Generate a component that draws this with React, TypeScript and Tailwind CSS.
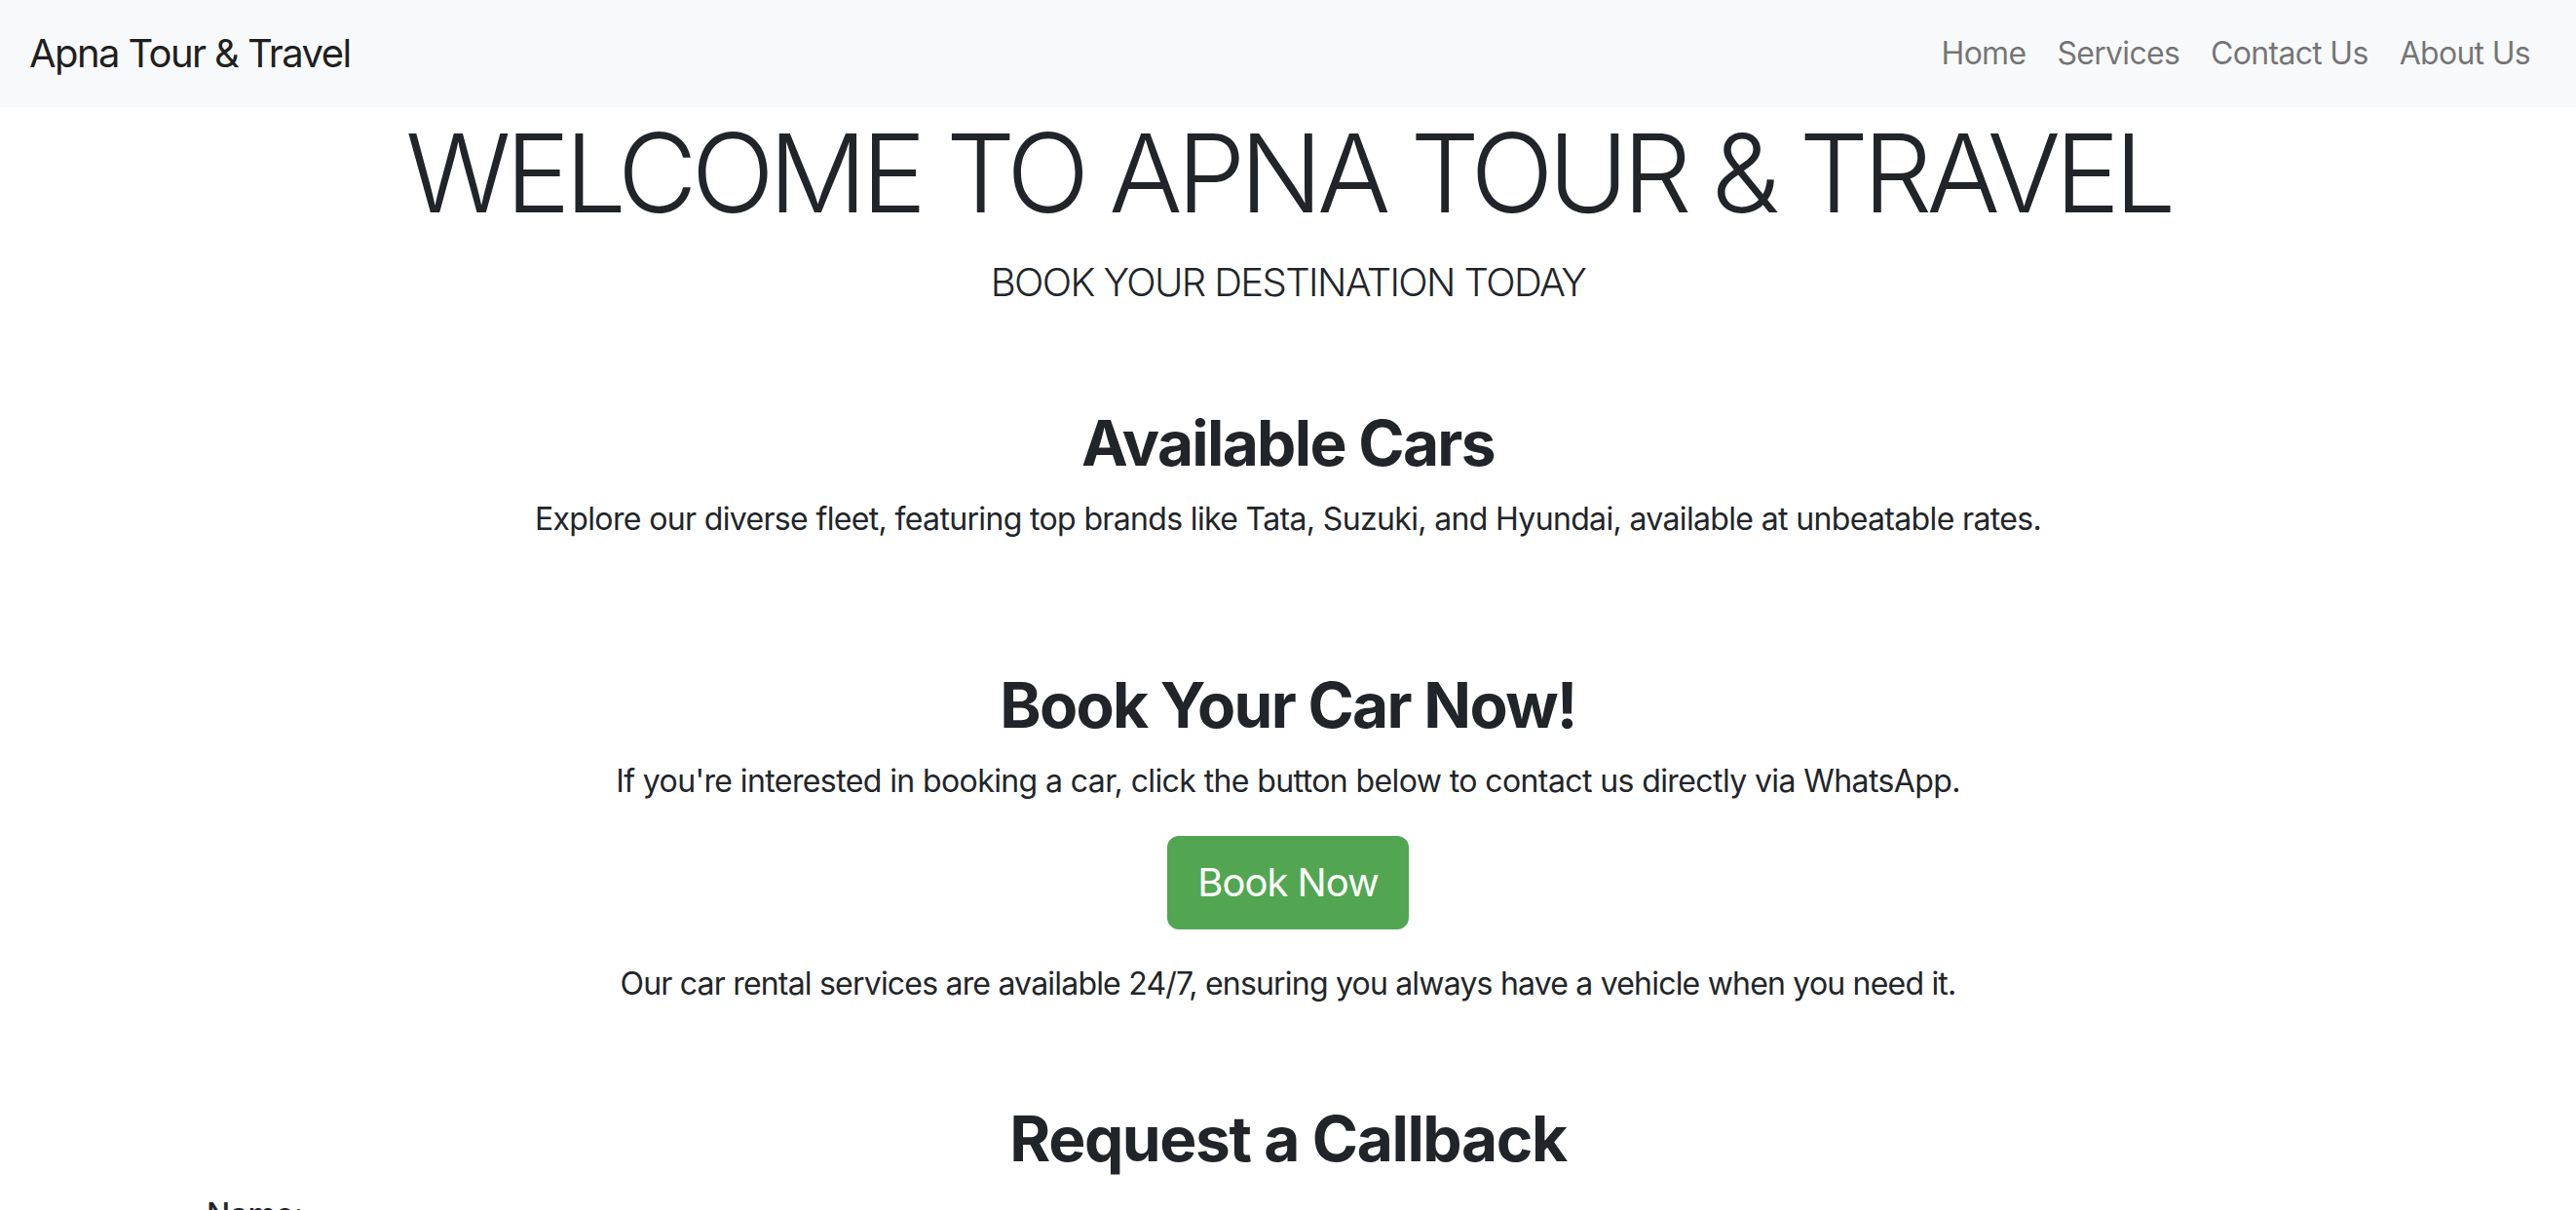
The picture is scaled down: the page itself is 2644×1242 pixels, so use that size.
const links = ["Home", "Services", "Contact Us", "About Us"];

function Navbar() {
  return (
    <nav className="flex h-[110px] items-center justify-between bg-[#f8f9fa] pl-[30px] pr-[31px]">
      <a href="#" className="text-[40px] leading-[60px] tracking-[-1.6px] text-black/90">
        Apna Tour &amp; Travel
      </a>
      <ul className="flex">
        {links.map((label) => (
          <li key={label}>
            <a href="#" className="block px-[16px] text-[32px] leading-[48px] tracking-[-0.7px] text-black/55">
              {label}
            </a>
          </li>
        ))}
      </ul>
    </nav>
  );
}

export default function App() {
  return (
    <div className="min-h-screen bg-white font-['Inter','Liberation_Sans',sans-serif] text-[#212529]">
      <Navbar />

      <header className="text-center">
        <h1 className="text-[112px] font-light leading-[134px] tracking-[-5.7px]">WELCOME TO APNA TOUR &amp; TRAVEL</h1>
        <p className="mt-[16px] text-[40px] font-light leading-[60px] tracking-[-1.6px]">BOOK YOUR DESTINATION TODAY</p>
      </header>

      <section className="mt-[96px] text-center">
        <h2 className="text-[64px] font-bold leading-[77px] tracking-[-1.7px]">Available Cars</h2>
        <p className="mt-[16px] text-[32px] leading-[48px] tracking-[-0.65px]">
          Explore our diverse fleet, featuring top brands like Tata, Suzuki, and Hyundai, available at unbeatable rates.
        </p>
      </section>

      <section className="mt-[128px] text-center">
        <h2 className="text-[64px] font-bold leading-[77px] tracking-[-1.7px]">Book Your Car Now!</h2>
        <p className="mt-[16px] text-[32px] leading-[48px] tracking-[-0.6px]">
          If you're interested in booking a car, click the button below to contact us directly via WhatsApp.
        </p>
        <a
          href="#"
          className="mt-[32px] inline-block rounded-[12px] bg-[#52a652] px-[31px] py-[18px] text-[40px] leading-[60px] tracking-[-1px] text-white"
        >
          Book Now
        </a>
        <p className="mt-[32px] text-[32px] leading-[48px] tracking-[-0.8px]">
          Our car rental services are available 24/7, ensuring you always have a vehicle when you need it.
        </p>
      </section>

      <section className="mx-auto mt-[96px] w-[2280px] px-[24px]">
        <h2 className="text-center text-[64px] font-bold leading-[77px] tracking-[-1.4px]">Request a Callback</h2>
        <form className="mt-[16px] flex flex-col gap-[16px] pl-[6px]">
          <label className="text-[32px] font-medium leading-[48px] text-[#212529]">Name:</label>
          <input className="h-[76px] rounded-[12px] border-2 border-[#dee2e6] px-[24px] text-[32px]" />
        </form>
      </section>
    </div>
  );
}
